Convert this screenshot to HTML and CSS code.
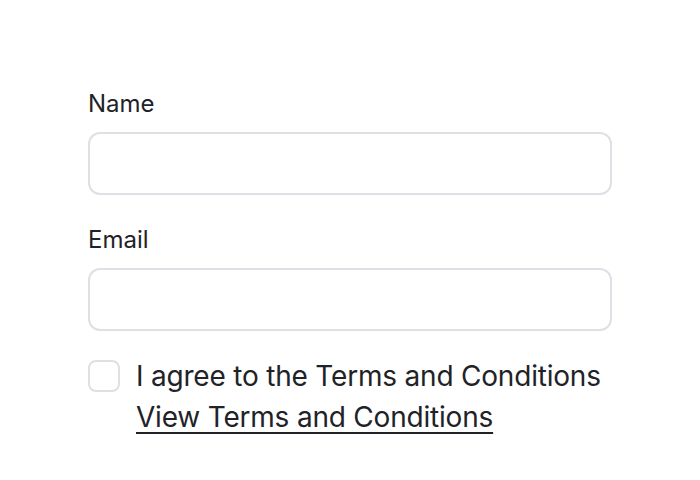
FILE: index.html
```html
<!DOCTYPE html>
<html lang="en">
<head>
<meta charset="utf-8">
<title>Form</title>
<link rel="stylesheet" href="styles.css">
</head>
<body>
<form class="form">
  <div class="field">
    <label class="label" for="name">Name</label>
    <input class="input" id="name" type="text">
  </div>
  <div class="field">
    <label class="label" for="email">Email</label>
    <input class="input" id="email" type="email">
  </div>
  <div class="agree">
    <input class="check" type="checkbox" id="agree">
    <div class="agree-text">
      <label for="agree" class="agree-label">I agree to the Terms and Conditions</label>
      <a class="link" href="#">View Terms and Conditions</a>
    </div>
  </div>
</form>
</body>
</html>
```
FILE: styles.css
```css
html, body {
  margin: 0;
  padding: 0;
  background: #ffffff;
}
body {
  font-family: Inter, "Noto Sans", sans-serif;
  color: #1f2328;
}
.form {
  width: 524px;
  margin: 0 auto;
  padding-top: 89px;
  display: flex;
  flex-direction: column;
  gap: 30px;
}
.field {
  display: flex;
  flex-direction: column;
  gap: 13px;
}
.label {
  font-size: 24px;
  line-height: 30px;
}
.input {
  box-sizing: border-box;
  width: 100%;
  height: 63px;
  margin: 0;
  border: 2px solid #dde0e4;
  border-radius: 12px;
  background: #fff;
  font: inherit;
  outline: none;
}
.agree {
  display: flex;
  gap: 16px;
  align-items: flex-start;
  margin-top: -5px;
}
.check {
  appearance: none;
  -webkit-appearance: none;
  box-sizing: border-box;
  width: 32px;
  height: 32px;
  margin: 4px 0 0 0;
  border: 2px solid #dde0e4;
  border-radius: 8px;
  background: #fff;
  flex: none;
}
.agree-text {
  display: flex;
  flex-direction: column;
  align-items: flex-start;
  font-size: 28px;
  line-height: 41px;
  letter-spacing: -0.2px;
}
.link {
  color: #1f2328;
  text-decoration: underline;
  text-underline-offset: 5px;
  text-decoration-thickness: 2px;
}
```
